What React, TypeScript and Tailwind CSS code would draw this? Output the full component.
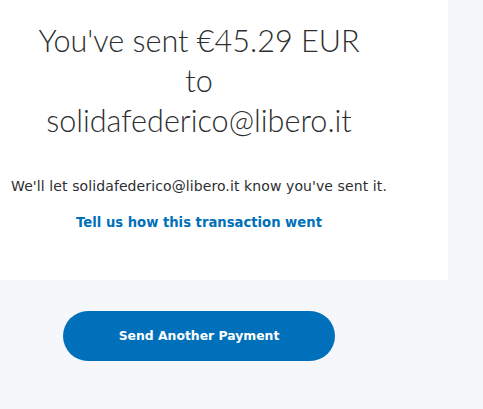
export default function App() {
  return (
    <div className="min-h-[409px] w-[483px] bg-[#f5f7fa] overflow-hidden">
      <div className="w-[448px] h-[280px] bg-white pr-[50px] flex flex-col">
        <div className="w-[398px] flex flex-col items-center">
          <h1 className="mt-[21px] text-center text-[30.6px] leading-[40px] text-[#2c2e2f] font-['Lato',sans-serif] font-light">
            You've sent €45.29 EUR
            <br />
            to
            <br />
            solidafederico@libero.it
          </h1>
          <p className="mt-[35px] text-center text-[14px] tracking-[0.1px] leading-[20px] text-[#2c2e2f] font-['DejaVu_Sans',sans-serif] whitespace-nowrap">
            We'll let solidafederico@libero.it know you've sent it.
          </p>
          <a className="mt-[17px] text-[13.2px] leading-[20px] font-bold text-[#0070ba] font-['DejaVu_Sans',sans-serif]">
            Tell us how this transaction went
          </a>
        </div>
      </div>
      <div className="w-[398px] flex justify-center pt-[31px]">
        <button className="w-[272px] h-[50px] rounded-full bg-[#0070ba] text-white text-[12.4px] font-bold font-['DejaVu_Sans',sans-serif]">
          Send Another Payment
        </button>
      </div>
    </div>
  );
}
